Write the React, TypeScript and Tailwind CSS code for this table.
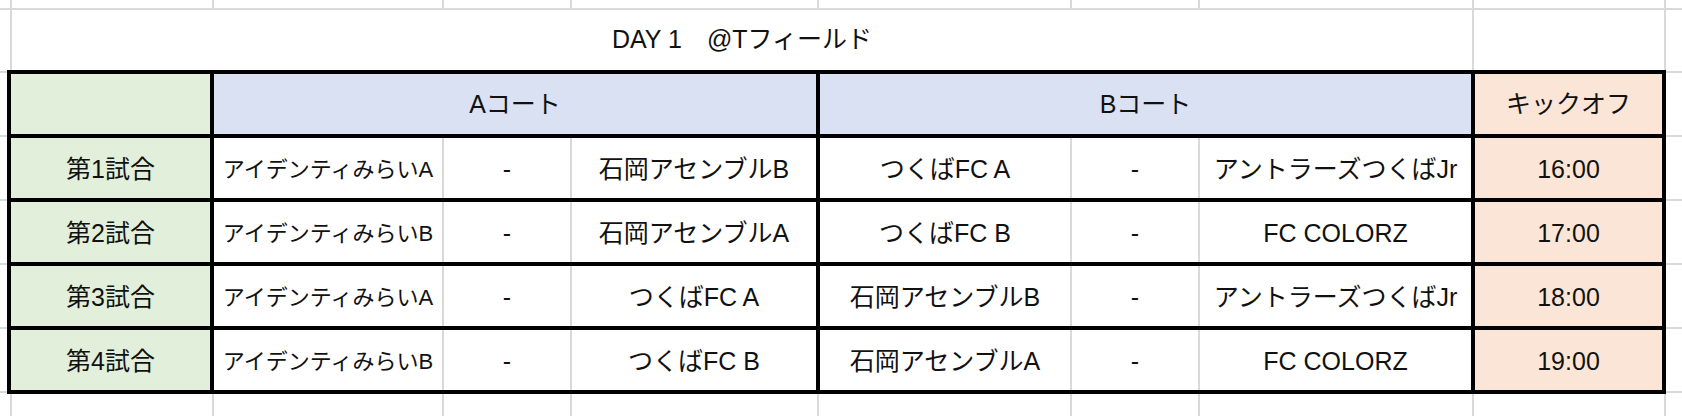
import * as React from "react"

// spreadsheet column widths, each including its 2px right gridline
const sheetCols = [
  "w-[12px]",
  "w-[202px]",
  "w-[230px]",
  "w-[128px]",
  "w-[247px]",
  "w-[253px]",
  "w-[128px]",
  "w-[274px]",
  "w-[192px]",
]

interface Match {
  label: string
  a: [string, string]
  b: [string, string]
  time: string
}

const matches: Match[] = [
  { label: "第1試合", a: ["アイデンティみらいA", "石岡アセンブルB"], b: ["つくばFC A", "アントラーズつくばJr"], time: "16:00" },
  { label: "第2試合", a: ["アイデンティみらいB", "石岡アセンブルA"], b: ["つくばFC B", "FC COLORZ"], time: "17:00" },
  { label: "第3試合", a: ["アイデンティみらいA", "つくばFC A"], b: ["石岡アセンブルB", "アントラーズつくばJr"], time: "18:00" },
  { label: "第4試合", a: ["アイデンティみらいB", "つくばFC B"], b: ["石岡アセンブルA", "FC COLORZ"], time: "19:00" },
]

const GridStrip = ({ height }: { height: string }) => (
  <div className={`flex ${height}`}>
    {sheetCols.map((w, i) => (
      <div key={i} className={`${w} shrink-0 border-r-2 border-[#d9d9d9]`} />
    ))}
    <div className="flex-1" />
  </div>
)

const MarginLines = ({ width }: { width: string }) => (
  <div className={`${width} flex flex-col pt-[1px]`}>
    <div className="h-[64px] border-t-2 border-[#d9d9d9]" />
    <div className="h-[64px] border-t-2 border-[#d9d9d9]" />
    <div className="h-[64px] border-t-2 border-[#d9d9d9]" />
    <div className="h-[64px] border-t-2 border-[#d9d9d9]" />
    <div className="h-[64px] border-t-2 border-[#d9d9d9]" />
    <div className="h-[2px] bg-[#d9d9d9]" />
  </div>
)

const Cell = ({ children, className = "" }: { children?: React.ReactNode; className?: string }) => (
  <div className={`flex items-center justify-center whitespace-nowrap pt-[3px] ${className}`}>{children}</div>
)

export default function App() {
  return (
    <div className="w-[1682px] h-[416px] overflow-hidden bg-white text-[25px] leading-none text-[#111] font-['Liberation_Sans','Noto_Sans_CJK_JP',sans-serif]">
      <div className="border-b-2 border-[#d9d9d9]">
        <GridStrip height="h-[8px]" />
      </div>

      {/* title row */}
      <div className="flex h-[60px]">
        <div className="w-[12px] shrink-0 border-r-2 border-[#d9d9d9]" />
        <div className="w-[1462px] shrink-0 border-r-2 border-[#d9d9d9] flex items-center justify-center pb-[2px]">
          DAY 1　@Tフィールド
        </div>
        <div className="w-[192px] shrink-0 border-r-2 border-[#d9d9d9]" />
        <div className="flex-1" />
      </div>

      {/* schedule table */}
      <div className="flex h-[324px]">
        <MarginLines width="w-[7px]" />
        <div className="w-[1659px] shrink-0 grid grid-cols-[199px_602px_651px_187px] grid-rows-[repeat(5,60px)] gap-[4px] p-[4px] bg-black">
          <div className="bg-[#e2efda]" />
          <Cell className="bg-[#d9e1f2] !pt-0">Aコート</Cell>
          <Cell className="bg-[#d9e1f2] !pt-0">Bコート</Cell>
          <Cell className="bg-[#fbe5d6] !pt-0">キックオフ</Cell>

          {matches.map((m) => (
            <React.Fragment key={m.label}>
              <Cell className="bg-[#e2efda]">{m.label}</Cell>
              <div className="flex bg-white">
                <Cell className="w-[230px] shrink-0 border-r-2 border-[#d9d9d9] text-[22px]">{m.a[0]}</Cell>
                <Cell className="w-[128px] shrink-0 border-r-2 border-[#d9d9d9]">-</Cell>
                <Cell className="flex-1">{m.a[1]}</Cell>
              </div>
              <div className="flex bg-white">
                <Cell className="w-[252px] shrink-0 border-r-2 border-[#d9d9d9]">{m.b[0]}</Cell>
                <Cell className="w-[128px] shrink-0 border-r-2 border-[#d9d9d9]">-</Cell>
                <Cell className="flex-1">{m.b[1]}</Cell>
              </div>
              <Cell className="bg-[#fbe5d6]">{m.time}</Cell>
            </React.Fragment>
          ))}
        </div>
        <MarginLines width="flex-1" />
      </div>

      <GridStrip height="h-[22px]" />
    </div>
  )
}
